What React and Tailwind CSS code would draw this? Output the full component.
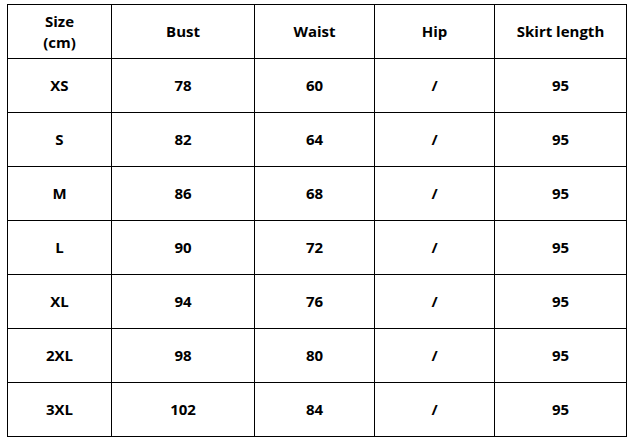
const headers = ['Size\n(cm)', 'Bust', 'Waist', 'Hip', 'Skirt length']

const rows = [
    ['XS', '78', '60', '/', '95'],
    ['S', '82', '64', '/', '95'],
    ['M', '86', '68', '/', '95'],
    ['L', '90', '72', '/', '95'],
    ['XL', '94', '76', '/', '95'],
    ['2XL', '98', '80', '/', '95'],
    ['3XL', '102', '84', '/', '95'],
]

const Cell = ({ children }) => (
    <div className="bg-white flex items-center justify-center text-center whitespace-pre-line leading-[21px]">
        {children}
    </div>
)

const App = () => {
    return (
        <div className="w-[633px] h-[442px] bg-white pt-[4px] pl-[7px] text-black text-[15px] font-bold" style={{ fontFamily: '"Open Sans", "Noto Sans", sans-serif' }}>
            <div className="grid grid-cols-[103px_142px_119px_119px_131px] auto-rows-[53px] gap-px bg-black p-px w-fit">
                {headers.map(h => <Cell key={h}>{h}</Cell>)}
                {rows.map(r => r.map((v, i) => <Cell key={r[0] + i}>{v}</Cell>))}
            </div>
        </div>
    )
}

export default App
